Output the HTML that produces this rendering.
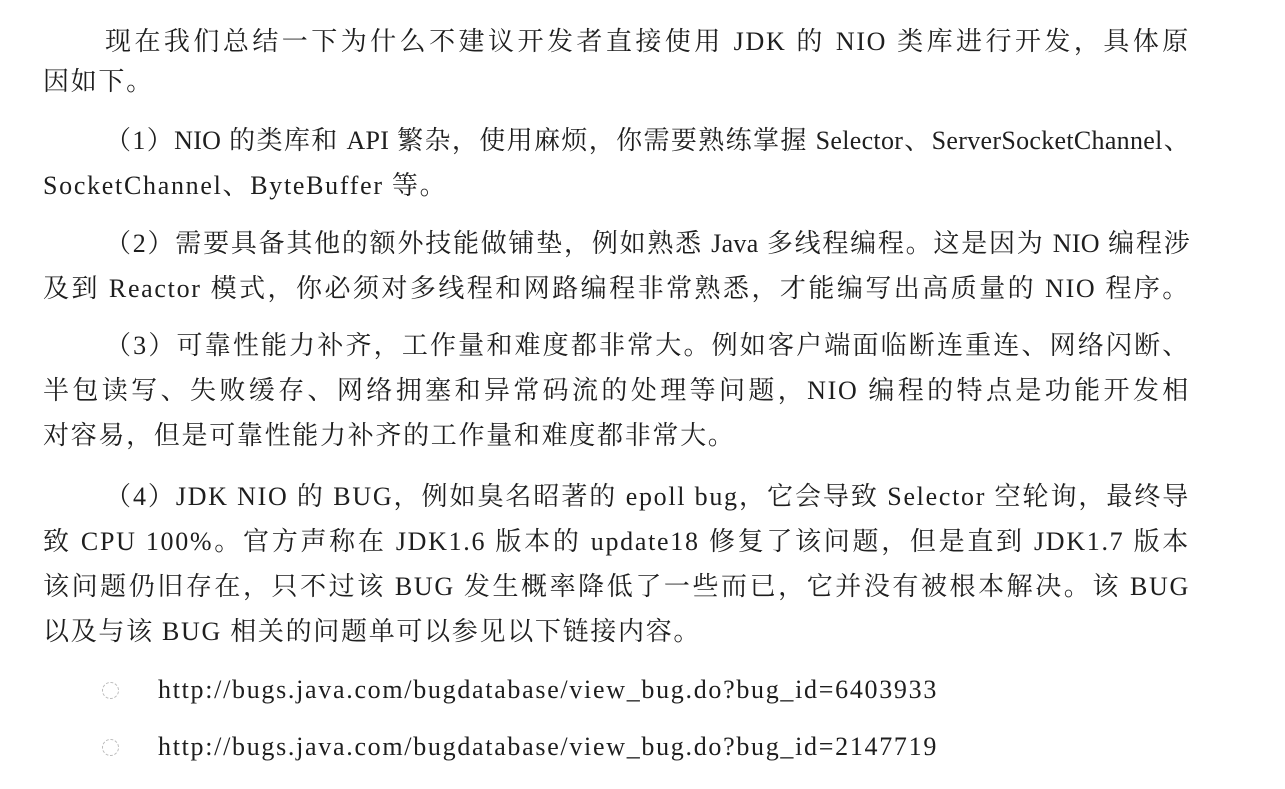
<!DOCTYPE html>
<html><head><meta charset="utf-8"><style>
body{margin:0;background:#fff;width:1285px;height:789px;overflow:hidden;position:relative;}
.l{position:absolute;left:43px;width:1147px;height:44px;line-height:44px;font-size:26px;letter-spacing:1.7px;color:#1e1e1e;
font-family:"Liberation Serif","Noto Serif CJK SC",serif;white-space:nowrap;text-align:justify;text-align-last:justify;}
.i{left:105px;width:1085px;}
.n{text-align-last:left;}
.t{letter-spacing:0.3px;}
.b{position:absolute;left:102px;width:15px;height:15px;border:1.5px dashed #bbb;border-radius:50%;}
</style></head><body>
<div class="l i" style="top:20px">现在我们总结一下为什么不建议开发者直接使用 JDK 的 NIO 类库进行开发，具体原</div>
<div class="l n" style="top:60px">因如下。</div>
<div class="l i t" style="top:119px">（1）NIO 的类库和 API 繁杂，使用麻烦，你需要熟练掌握 Selector、ServerSocketChannel、</div>
<div class="l n" style="top:164px">SocketChannel、ByteBuffer 等。</div>
<div class="l i t" style="top:222px">（2）需要具备其他的额外技能做铺垫，例如熟悉 Java 多线程编程。这是因为 NIO 编程涉</div>
<div class="l" style="top:267px">及到 Reactor 模式，你必须对多线程和网路编程非常熟悉，才能编写出高质量的 NIO 程序。</div>
<div class="l i" style="top:324px">（3）可靠性能力补齐，工作量和难度都非常大。例如客户端面临断连重连、网络闪断、</div>
<div class="l" style="top:369px">半包读写、失败缓存、网络拥塞和异常码流的处理等问题，NIO 编程的特点是功能开发相</div>
<div class="l n" style="top:414px">对容易，但是可靠性能力补齐的工作量和难度都非常大。</div>
<div class="l i" style="top:475px">（4）JDK NIO 的 BUG，例如臭名昭著的 epoll bug，它会导致 Selector 空轮询，最终导</div>
<div class="l" style="top:520px">致 CPU 100%。官方声称在 JDK1.6 版本的 update18 修复了该问题，但是直到 JDK1.7 版本</div>
<div class="l" style="top:565px">该问题仍旧存在，只不过该 BUG 发生概率降低了一些而已，它并没有被根本解决。该 BUG</div>
<div class="l n" style="top:610px">以及与该 BUG 相关的问题单可以参见以下链接内容。</div>
<div class="b" style="top:682px"></div>
<div class="l n" style="top:668px;left:158px">http://bugs.java.com/bugdatabase/view_bug.do?bug_id=6403933</div>
<div class="b" style="top:739px"></div>
<div class="l n" style="top:725px;left:158px">http://bugs.java.com/bugdatabase/view_bug.do?bug_id=2147719</div>
</body></html>
